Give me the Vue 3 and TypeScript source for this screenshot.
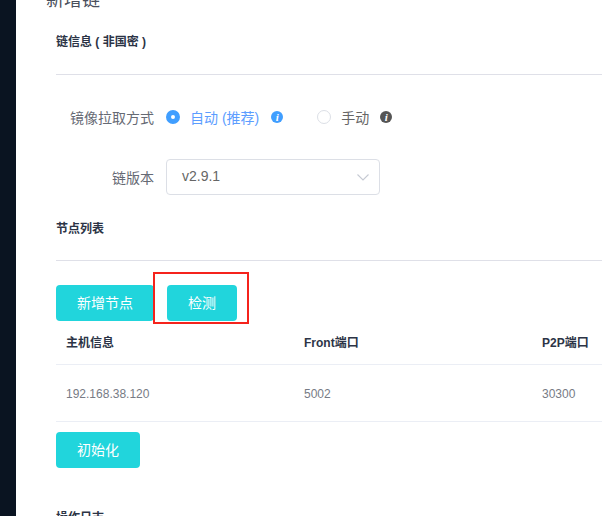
<script setup lang="ts">
interface NodeRow { host: string; front: string; p2p: string }
const rows: NodeRow[] = [{ host: '192.168.38.120', front: '5002', p2p: '30300' }]
</script>

<template>
  <div class="page">
    <aside class="side"></aside>
    <main class="main">
      <h1 class="title">新增链</h1>
      <section class="content">
        <h2 class="sec first">链信息 ( 非国密 )</h2>
        <div class="rule"></div>

        <div class="form-row radio-row">
          <label class="label">镜像拉取方式</label>
          <span class="radio on"></span>
          <span class="radio-text active">自动 (推荐)</span>
          <span class="info blue">i</span>
          <span class="radio off"></span>
          <span class="radio-text">手动</span>
          <span class="info gray">i</span>
        </div>

        <div class="form-row select-row">
          <label class="label">链版本</label>
          <div class="select">
            <span class="select-value">v2.9.1</span>
            <svg width="12" height="7" viewBox="0 0 12 7" fill="none"><path d="M.5.5l5.5 5.5 5.5-5.5" stroke="#c6cad3" stroke-width="1.1"/></svg>
          </div>
        </div>

        <h2 class="sec second">节点列表</h2>
        <div class="rule"></div>

        <div class="actions">
          <button class="btn">新增节点</button>
          <div class="highlighted">
            <button class="btn">检测</button>
            <div class="red-box"></div>
          </div>
        </div>

        <div class="table">
          <div class="tr head">
            <div class="td">主机信息</div>
            <div class="td">Front端口</div>
            <div class="td">P2P端口</div>
          </div>
          <div v-for="r in rows" :key="r.host" class="tr body">
            <div class="td">{{ r.host }}</div>
            <div class="td">{{ r.front }}</div>
            <div class="td">{{ r.p2p }}</div>
          </div>
        </div>

        <button class="btn init">初始化</button>
        <h2 class="sec log">操作日志</h2>
      </section>
    </main>
  </div>
</template>

<style>
html, body { margin: 0; overflow: hidden; background: #fff; }
</style>

<style scoped>
.page {
  display: flex;
  width: 602px;
  height: 516px;
  overflow: hidden;
  font-family: "Liberation Sans", "Noto Sans CJK SC", sans-serif;
  background: #fff;
}
.side { width: 16px; flex: none; background: #0a1421; }
.main { flex: 1; min-width: 0; padding-left: 30px; margin-top: -10px; }
.title { margin: 0; font-size: 18px; line-height: 20px; font-weight: 400; color: #4a4f5c; }
.content { padding-left: 10px; }
.sec { margin: 0; font-size: 12px; line-height: 16px; font-weight: 700; color: #2c3446; }
.sec.first { margin-top: 24px; }
.rule { height: 1px; background: #dfe0e8; }
.sec.first + .rule { margin-top: 24px; }
.sec.second { margin-top: 26px; }
.sec.second + .rule { margin-top: 23px; }
.form-row { display: flex; align-items: center; }
.label { width: 98px; text-align: right; margin-right: 12px; font-size: 14px; color: #666a74; flex: none; }
.radio-row { margin-top: 32px; height: 20px; }
.radio { width: 14px; height: 14px; border-radius: 50%; box-sizing: border-box; flex: none; }
.radio.on { border: 5px solid #409eff; background: #fff; }
.radio.off { border: 1px solid #dcdfe6; margin-left: 34px; }
.radio-text { margin-left: 10px; font-size: 14px; color: #666; }
.radio-text.active { color: #5c9dff; }
.info {
  width: 12px; height: 12px; border-radius: 50%; margin-left: 12px; color: #fff;
  font: italic 700 11px/12px "Liberation Serif", serif; text-align: center; flex: none;
}
.info.blue { background: #409eff; }
.info.gray { background: #555; margin-left: 11px; }
.select-row { margin-top: 32px; }
.select {
  width: 214px; height: 36px; box-sizing: border-box; border: 1px solid #dcdfe6; border-radius: 4px;
  display: flex; align-items: center; justify-content: space-between; padding: 0 10px 0 15px;
  font-size: 14px; color: #666;
}
.select-value { margin-top: -2px; }
.actions { display: flex; gap: 13px; margin-top: 24px; }
.btn {
  height: 36px; padding: 0 21px 2px; border: 0; border-radius: 4px; background: #21d5dc; color: #fff;
  font-family: inherit; font-size: 14px; display: block;
}
.highlighted { position: relative; }
.red-box { position: absolute; left: -14px; top: -13px; width: 96px; height: 52px; box-sizing: border-box; border: 2px solid #f5231c; }
.table { width: 714px; }
.tr { display: grid; grid-template-columns: repeat(3, 238px); }
.td { padding-left: 10px; }
.head { height: 43px; align-items: center; font-size: 12px; font-weight: 700; color: #2c3446; border-bottom: 1px solid #ebeef5; }
.head .td { margin-top: -2px; }
.body { height: 56px; align-items: center; font-size: 12px; color: #777b85; border-bottom: 1px solid #ebeef5; }
.body .td { margin-top: 2px; }
.init { margin-top: 10px; }
.sec.log { margin-top: 42px; }
</style>
